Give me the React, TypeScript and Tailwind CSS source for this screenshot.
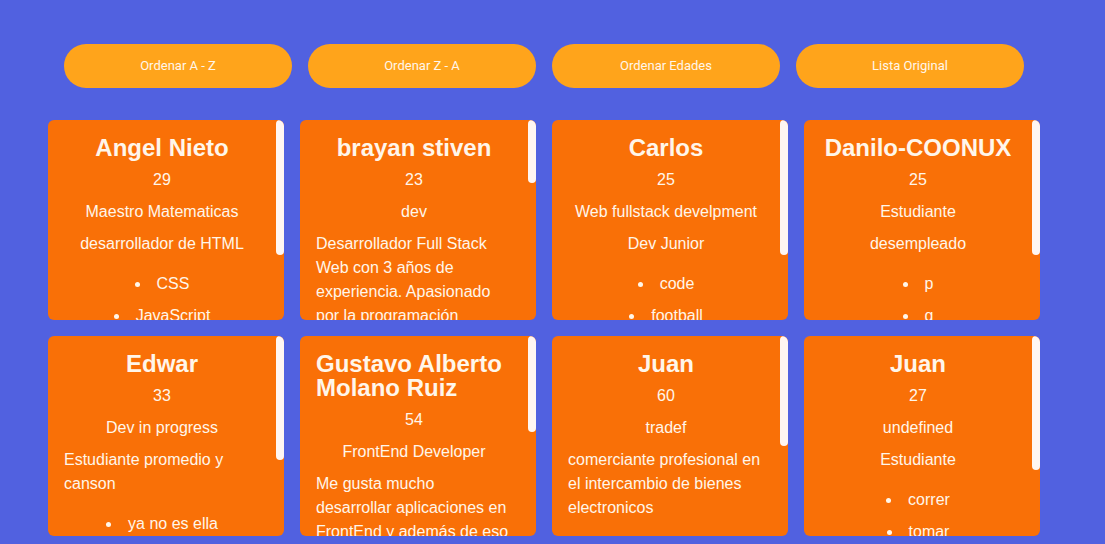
import React from 'react';

type Person = {
  name: string;
  age: number;
  job: string;
  description: string;
  hobbies: string[];
  thumb: number;
};

const people: Person[] = [
  {
    name: 'Angel Nieto',
    age: 29,
    job: 'Maestro Matematicas',
    description: 'desarrollador de HTML',
    hobbies: ['CSS', 'JavaScript', 'React', 'Node'],
    thumb: 135,
  },
  {
    name: 'brayan stiven',
    age: 23,
    job: 'dev',
    description:
      'Desarrollador Full Stack Web con 3 años de experiencia. Apasionado por la programación fullstack y el desarrollo de aplicaciones web modernas, con conocimientos en JavaScript, React, Node, bases de datos relacionales y no relacionales, siempre buscando aprender nuevas tecnologías y mejorar cada día como profesional y como persona.',
    hobbies: ['programar', 'leer', 'musica', 'futbol', 'viajar'],
    thumb: 63,
  },
  {
    name: 'Carlos',
    age: 25,
    job: 'Web fullstack develpment',
    description: 'Dev Junior',
    hobbies: ['code', 'football', 'music', 'games'],
    thumb: 135,
  },
  {
    name: 'Danilo-COONUX',
    age: 25,
    job: 'Estudiante',
    description: 'desempleado',
    hobbies: ['p', 'q', 'r', 's'],
    thumb: 135,
  },
  {
    name: 'Edwar',
    age: 33,
    job: 'Dev in progress',
    description: 'Estudiante promedio y canson',
    hobbies: ['ya no es ella', 'dormir', 'comer', 'jugar'],
    thumb: 124,
  },
  {
    name: 'Gustavo Alberto Molano Ruiz',
    age: 54,
    job: 'FrontEnd Developer',
    description:
      'Me gusta mucho desarrollar aplicaciones en FrontEnd y además de eso aprender cosas nuevas todos los días.',
    hobbies: ['leer', 'caminar', 'cine', 'musica'],
    thumb: 96,
  },
  {
    name: 'Juan',
    age: 60,
    job: 'tradef',
    description: 'comerciante profesional en el intercambio de bienes electronicos',
    hobbies: ['vender', 'comprar', 'negociar', 'viajar', 'leer'],
    thumb: 110,
  },
  {
    name: 'Juan',
    age: 27,
    job: 'undefined',
    description: 'Estudiante',
    hobbies: ['correr', 'tomar', 'bailar', 'cantar'],
    thumb: 134,
  },
];

const buttons = ['Ordenar A - Z', 'Ordenar Z - A', 'Ordenar Edades', 'Lista Original'];

function Card({ person }: { person: Person }): JSX.Element {
  return (
    <div className="relative h-[200px] overflow-hidden rounded-md bg-[#f97007] text-[#fff6ea]">
      <div className="flex w-[228px] flex-col items-center gap-2 p-4 text-base leading-6">
        <h2 className="text-2xl font-bold leading-6">{person.name}</h2>
        <p>{person.age}</p>
        <p>{person.job}</p>
        <p>{person.description}</p>
        <ul className="mt-2 flex list-inside list-disc flex-col gap-2 text-center">
          {person.hobbies.map((h) => (
            <li key={h}>{h}</li>
          ))}
        </ul>
      </div>
      {/* scrollbar thumb */}
      <div
        className="absolute top-0 right-0 w-2 rounded-full bg-[#fff6f2]"
        style={{ height: person.thumb }}
      />
    </div>
  );
}

export default function App(): JSX.Element {
  return (
    <div className="min-h-screen bg-[#5161e0] pt-11 pb-8 font-['Liberation_Sans',Arial,sans-serif]">
      <div className="flex gap-4 pl-16">
        {buttons.map((b) => (
          <button
            key={b}
            type="button"
            className="h-11 w-[228px] rounded-full bg-[#ffa41b] font-['Roboto',sans-serif] text-[13px] text-[#fff6ea]"
          >
            {b}
          </button>
        ))}
      </div>
      <div className="mt-8 grid grid-cols-[repeat(4,236px)] gap-4 pl-12">
        {people.map((p, i) => (
          <Card key={i} person={p} />
        ))}
      </div>
    </div>
  );
}
